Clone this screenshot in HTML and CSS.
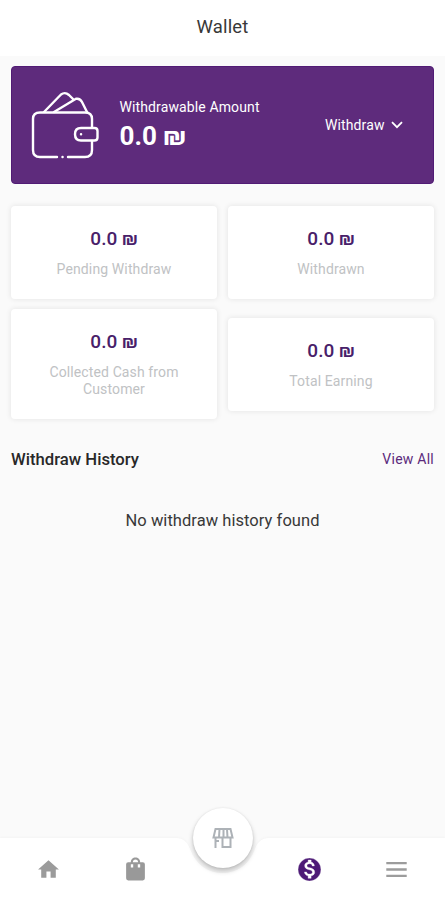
FILE: index.html
```html
<!DOCTYPE html>
<html lang="en">
<head>
<meta charset="utf-8">
<title>Wallet</title>
<link rel="stylesheet" href="styles.css">
</head>
<body>
<div class="screen">
  <header class="topbar"><h1 class="title">Wallet</h1></header>
  <main class="content">
    <section class="balance">
      <svg class="wallet" viewBox="0 0 70 70" fill="none" stroke="#fff" stroke-width="2.4" stroke-linecap="round" stroke-linejoin="round">
        <path d="M27 66H10Q3 66 3 59V28Q3 21.500 10 21.500H55Q62 21.500 62 28V36M62 50V59Q62 66 55 66H38"/>
        <path d="M51 37H64.500Q67.500 37 67.500 40V46.500Q67.500 49.500 64.500 49.500H51Q45 49.500 45 43.250Q45 37 51 37Z"/>
        <path d="M14 21L31 3.500Q35 0.500 39 4L43 8M24 21L46 7.800Q50 7 52 11L57 21"/>
        <path d="M32.500 66h.1M51 43.200h.1"/>
      </svg>
      <div class="balance-info">
        <span class="balance-label">Withdrawable Amount</span>
        <span class="balance-value">0.0 ₪</span>
      </div>
      <div class="withdraw"><span>Withdraw</span>
        <svg class="chevron" viewBox="0 0 12 8" fill="none" stroke="#fff" stroke-width="1.800"><path d="M1 1.200L6 6.200L11 1.200"/></svg>
      </div>
    </section>
    <section class="stats">
      <div class="stat"><span class="stat-value">0.0 ₪</span><span class="stat-label">Pending Withdraw</span></div>
      <div class="stat"><span class="stat-value">0.0 ₪</span><span class="stat-label">Withdrawn</span></div>
      <div class="stat"><span class="stat-value">0.0 ₪</span><span class="stat-label">Collected Cash from<br>Customer</span></div>
      <div class="stat"><span class="stat-value">0.0 ₪</span><span class="stat-label">Total Earning</span></div>
    </section>
    <section class="history-head">
      <h2 class="history-title">Withdraw History</h2>
      <span class="view-all">View All</span>
    </section>
    <p class="empty">No withdraw history found</p>
  </main>
  <nav class="nav">
    <svg class="nav-shape" viewBox="0 0 445 62" fill="#fff"><path d="M0 0H175C184 0 187 4 190 11C196 27 208 35 222.500 35C237 35 249 27 255 11C258 4 261 0 270 0H445V62H0Z"/></svg>
    <div class="nav-item"><svg class="icon" viewBox="0 0 24 24" fill="#9b9b9b"><path d="M10 20v-6h4v6h5v-8h3L12 3 2 12h3v8z"/></svg></div>
    <div class="nav-item"><svg class="icon" viewBox="0 0 24 24" fill="#999"><path fill-rule="evenodd" d="M5 5H7.500C7.500 2.500 9.500 .5 12 .5S16.500 2.500 16.500 5H19Q21 5 21 7V20.500Q21 22.500 19 22.500H5Q3 22.500 3 20.500V7Q3 5 5 5ZM9.500 5H14.500C14.500 3.500 13.500 2.500 12 2.500S9.500 3.500 9.500 5ZM7.500 7V10H9.800V7ZM14.200 7V10H16.500V7Z"/></svg></div>
    <div class="nav-item"><div class="fab"><svg class="store" viewBox="0 0 24 22" fill="none" stroke="#adb2b7" stroke-width="2"><path d="M4.500 2H19.500L21.500 10.500H2.500ZM8.500 2L8 10.500M12.500 2V10.500M16 2L16.500 10.500M4.500 11V21M4.500 14H8M11.500 11V20H19.500V11"/></svg></div></div>
    <div class="nav-item"><svg class="icon" viewBox="0 0 24 24" fill="#4d1a76"><path d="M12 1a11 11 0 1 0 0 22 11 11 0 0 0 0-22zm1.560 17.100V20.500h-2.900v-2.450c-1.870-.4-3.450-1.600-3.560-3.720h2.130c.1 1.140.9 2.030 2.900 2.030 2.150 0 2.630-1.070 2.630-1.740 0-.9-.48-1.760-2.900-2.330-2.690-.65-4.530-1.760-4.530-3.980 0-1.860 1.500-3.070 3.360-3.480V2.900h2.900v1.980c2.020.49 3.030 2.020 3.090 3.680h-2.130c-.05-1.210-.69-2.030-2.400-2.030-1.620 0-2.590.73-2.590 1.780 0 .91.700 1.500 2.900 2.060s4.530 1.510 4.530 4.240c0 1.980-1.490 3.070-3.370 3.430z" stroke="#fff" stroke-width=".3"/></svg></div>
    <div class="nav-item"><svg class="icon" viewBox="0 0 24 24" fill="#9c9c9c"><path d="M2.200 4.700h19.600v2.200H2.200zM2.200 10.900h19.600v2.200H2.200zM2.200 17.100h19.600v2.200H2.200z"/></svg></div>
  </nav>
</div>
</body>
</html>
```
FILE: styles.css
```css
* { box-sizing: border-box; }
body { margin: 0; font-family: Roboto, "Liberation Sans", sans-serif; }
.screen { width: 445px; height: 900px; display: flex; flex-direction: column; background: #fafafa; overflow: hidden; }
.topbar { height: 56px; flex: none; background: #fff; display: flex; align-items: center; justify-content: center; }
.title { margin: 0; padding-bottom: 2px; font-size: 18.5px; font-weight: 400; color: #383838; letter-spacing: .15px; }
.content { flex: 1; padding: 9.500px 11px 0; }
.balance { height: 118.500px; border-radius: 4px; background: #5e2b7c; border: 1px solid #511b75; color: #fff; display: flex; align-items: center; padding: 0 30.500px 0 18px; }
.wallet { width: 70px; height: 70px; margin-top: 2px; }
.balance-info { display: flex; flex-direction: column; margin-left: 19.500px; flex: 1; }
.balance-label { font-size: 14px; line-height: 18px; letter-spacing: .12px; }
.balance-value { font-size: 26px; line-height: 32px; font-weight: 700; margin-top: 4px; }
.withdraw { display: flex; align-items: center; gap: 6px; font-size: 14px; letter-spacing: .1px; }
.chevron { width: 12px; height: 8px; }
.stats { display: grid; grid-template-columns: 1fr 1fr; gap: 10px 11px; align-items: center; margin-top: 22px; }
.stat { background: #fff; border-radius: 4px; box-shadow: 0 0 5px 1px rgba(0,0,0,.07); min-height: 93px; padding: 20px 10px; display: flex; flex-direction: column; align-items: center; text-align: center; }
.stat:nth-child(3) { padding-bottom: 21px; }
.stat-value { font-size: 19px; line-height: 25px; font-weight: 500; color: #482069; }
.stat-label { margin-top: 10px; font-size: 14px; line-height: 17px; color: #c0c2c4; letter-spacing: .12px; }
.history-head { display: flex; align-items: center; justify-content: space-between; margin-top: 28px; height: 24px; }
.history-title { margin: 0; font-size: 16.700px; font-weight: 500; color: #282828; }
.view-all { font-size: 14px; color: #5b2a7c; letter-spacing: .25px; }
.empty { margin: 40px 0 0; text-align: center; font-size: 16.500px; line-height: 20px; color: #383838; letter-spacing: .05px; }
.nav { position: relative; height: 62px; flex: none; display: grid; grid-template-columns: repeat(5, 87px); justify-content: center; align-items: center; }
.nav-shape { position: absolute; left: 0; top: 0; width: 445px; height: 62px; filter: drop-shadow(0 -1px 1px rgba(0,0,0,.025)); }
.nav-item { position: relative; display: flex; justify-content: center; align-items: center; height: 62px; }
.icon { width: 25px; height: 25px; }
.fab { position: absolute; top: -30px; width: 60px; height: 60px; border-radius: 50%; background: #fff; box-shadow: 0 3px 5px rgba(0,0,0,.25), 0 0 2px rgba(0,0,0,.08); display: flex; align-items: center; justify-content: center; }
.store { width: 24px; height: 22px; }
```
